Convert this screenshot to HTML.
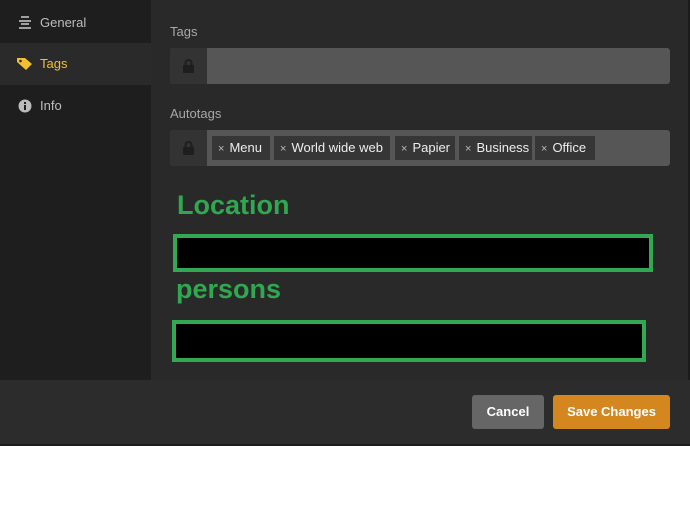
<!DOCTYPE html>
<html><head><style>
body{margin:0;width:690px;height:523px;background:#fff;font-family:"Segoe UI","Liberation Sans",sans-serif;position:relative;overflow:hidden}
.win{position:absolute;left:0;top:0;width:690px;height:446px;background:#1b1b1b}
.side{position:absolute;left:0;top:0;width:151px;height:380px;background:#1e1e1e}
.item{position:absolute;left:0;width:151px;height:42px;color:#bdbdbd;font-size:13px;line-height:42px}
.item span{position:absolute;left:40px}
.main{position:absolute;left:151px;top:0;width:537px;height:380px;background:#292929}
.lbl{position:absolute;left:19px;color:#a8a8a8;font-size:13px}
.inp{position:absolute;left:19px;width:500px;height:36px;background:#565656;border-radius:3px;overflow:hidden}
.lock{position:absolute;left:0;top:0;width:37px;height:36px;background:#333}
.tag{position:absolute;top:6px;height:24px;background:#363636;color:#eee;font-size:13px;line-height:24px;padding:0 0 0 6px;box-sizing:border-box}
.tag i{font-style:normal;color:#bbb;font-size:11px;margin-right:5px}
.green{position:absolute;color:#2fa84f;font-weight:bold;font-size:27px}
.box{position:absolute;background:#000;border:4px solid #32a852;box-sizing:border-box}
.foot{position:absolute;left:0;top:380px;width:690px;height:64px;background:#2c2c2c}
.btn{position:absolute;top:15px;height:34px;border-radius:3px;color:#fff;font-weight:bold;font-size:13px;line-height:34px;text-align:center}
</style></head><body>
<div class="win">
<div class="side">
 <div class="item" style="top:2px"><svg style="position:absolute;left:18px;top:14px" width="14" height="13"><path d="M3 1h8M1 5h12M3 8h8M1 12h12" stroke="#ccc" stroke-width="1.6"/></svg><span>General</span></div>
 <div class="item" style="top:43px;background:#2a2a2a;color:#f0c030"><svg style="position:absolute;left:16px;top:13px" width="18" height="16"><path d="M1 2h8l7 6-6 6-9-8z" fill="#f0c030"/><circle cx="4.5" cy="5" r="1.3" fill="#2a2a2a"/></svg><span>Tags</span></div>
 <div class="item" style="top:85px"><svg style="position:absolute;left:18px;top:14px" width="14" height="14"><circle cx="7" cy="7" r="6.5" fill="#bbb"/><rect x="6" y="6" width="2" height="5" fill="#1e1e1e"/><rect x="6" y="3" width="2" height="2" fill="#1e1e1e"/></svg><span>Info</span></div>
</div>
<div class="main">
 <div class="lbl" style="top:24px">Tags</div>
 <div class="inp" style="top:48px"><div class="lock"><svg style="position:absolute;left:13px;top:11px" width="11" height="14"><path d="M2.5 6V4a3 3 0 0 1 6 0v2" stroke="#1e1e1e" stroke-width="2" fill="none"/><rect x="0" y="6" width="11" height="8" rx="1" fill="#1e1e1e"/></svg></div></div>
 <div class="lbl" style="top:106px">Autotags</div>
 <div class="inp" style="top:130px"><div class="lock"><svg style="position:absolute;left:13px;top:11px" width="11" height="14"><path d="M2.5 6V4a3 3 0 0 1 6 0v2" stroke="#1e1e1e" stroke-width="2" fill="none"/><rect x="0" y="6" width="11" height="8" rx="1" fill="#1e1e1e"/></svg></div>
  <div class="tag" style="left:42px;width:58px"><i>×</i>Menu</div>
  <div class="tag" style="left:104px;width:116px"><i>×</i>World wide web</div>
  <div class="tag" style="left:225px;width:60px"><i>×</i>Papier</div>
  <div class="tag" style="left:289px;width:73px"><i>×</i>Business</div>
  <div class="tag" style="left:365px;width:60px"><i>×</i>Office</div>
 </div>
 <div class="green" style="left:26px;top:190px">Location</div>
 <div class="box" style="left:22px;top:234px;width:480px;height:38px"></div>
 <div class="green" style="left:25px;top:274px">persons</div>
 <div class="box" style="left:21px;top:320px;width:474px;height:42px"></div>
</div>
<div class="foot">
 <div class="btn" style="left:472px;width:72px;background:#666">Cancel</div>
 <div class="btn" style="left:553px;width:117px;background:#d4861f">Save Changes</div>
</div>
</div>
</body></html>
